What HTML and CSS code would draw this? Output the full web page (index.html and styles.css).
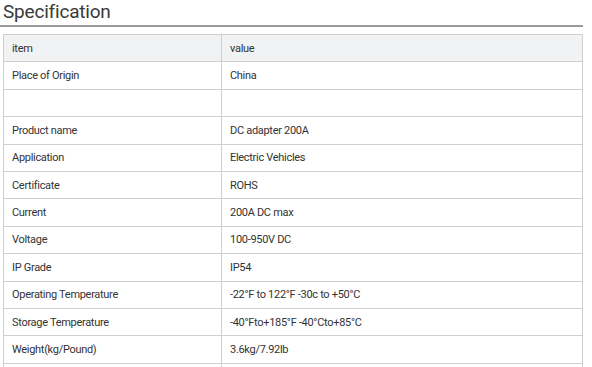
FILE: index.html
```html
<!DOCTYPE html>
<html>
<head>
<meta charset="utf-8">
<link rel="stylesheet" href="styles.css">
</head>
<body>
<div class="spec">
  <h2 class="title">Specification</h2>
  <table class="table">
    <tr class="head"><td class="c1">item</td><td>value</td></tr>
    <tr><td class="c1">Place of Origin</td><td>China</td></tr>
    <tr><td class="c1"></td><td></td></tr>
    <tr><td class="c1">Product name</td><td>DC adapter 200A</td></tr>
    <tr><td class="c1">Application</td><td>Electric Vehicles</td></tr>
    <tr><td class="c1">Certificate</td><td>ROHS</td></tr>
    <tr><td class="c1">Current</td><td>200A DC max</td></tr>
    <tr><td class="c1">Voltage</td><td>100-950V DC</td></tr>
    <tr><td class="c1">IP Grade</td><td>IP54</td></tr>
    <tr><td class="c1">Operating Temperature</td><td>-22°F to 122°F -30c to +50°C</td></tr>
    <tr><td class="c1">Storage Temperature</td><td>-40°Fto+185°F -40°Cto+85°C</td></tr>
    <tr><td class="c1">Weight(kg/Pound)</td><td>3.6kg/7.92lb</td></tr>
    <tr><td class="c1"></td><td></td></tr>
  </table>
</div>
</body>
</html>
```
FILE: styles.css
```css
html, body {
  margin: 0;
  padding: 0;
  background: #fff;
  overflow: hidden;
}
body {
  font-family: Roboto, "Liberation Sans", sans-serif;
  color: #333;
}
.spec {
  width: 583px;
  height: 367px;
  overflow: hidden;
}
.title {
  margin: 0;
  padding: 1px 0 2px 3px;
  font-size: 19px;
  font-weight: 400;
  letter-spacing: -0.2px;
  line-height: 22px;
  color: #3a3a3a;
  border-bottom: 2px solid #9a9a9a;
}
.table {
  margin: 7px 0 0 3px;
  width: 580px;
  border-collapse: collapse;
  font-size: 11px;
  letter-spacing: -0.3px;
}
.table td {
  border: 1px solid #cfcfcf;
  height: 27.4px;
  padding: 0 8px;
  box-sizing: border-box;
  vertical-align: middle;
  color: #333;
}
.table .c1 {
  width: 218px;
}
.head td {
  background: #f1f2f4;
}
```
